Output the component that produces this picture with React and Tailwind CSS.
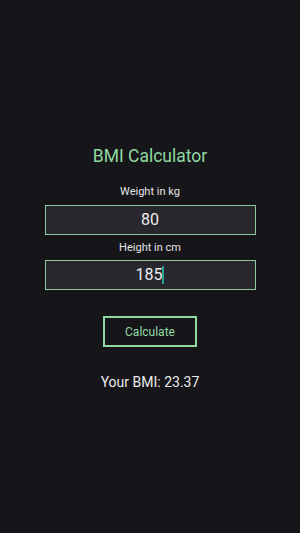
export default function App() {
  return (
    <div
      className="w-[300px] h-[533px] bg-[#16151a] flex flex-col items-center"
      style={{ fontFamily: "Roboto, 'Liberation Sans', sans-serif" }}
    >
      <h1 className="mt-[144px] text-[17.5px] leading-[24px] text-[#8fd9a0]">BMI Calculator</h1>

      <label className="mt-[17px] text-[11px] leading-[14px] text-[#e4e4e4]">Weight in kg</label>
      <div className="mt-[6px] w-[211px] h-[30px] bg-[#28272e] border border-[#8ec99a] flex items-center justify-center text-[16px] text-[#ececec]">
        80
      </div>

      <label className="mt-[6px] text-[11px] leading-[14px] text-[#e4e4e4]">Height in cm</label>
      <div className="mt-[5px] w-[211px] h-[30px] bg-[#28272e] border border-[#8ec99a] flex items-center justify-center text-[16px] text-[#ececec]">
        <span>185</span>
        <span className="w-[2px] h-[18px] bg-[#2aa198]"></span>
      </div>

      <button className="mt-[26px] w-[94px] h-[31px] border-2 border-[#8fd9a0] text-[12px] text-[#8fd9a0]">
        Calculate
      </button>

      <p className="mt-[26px] text-[14px] leading-[18px] text-[#ececec]">Your BMI: 23.37</p>
    </div>
  );
}
